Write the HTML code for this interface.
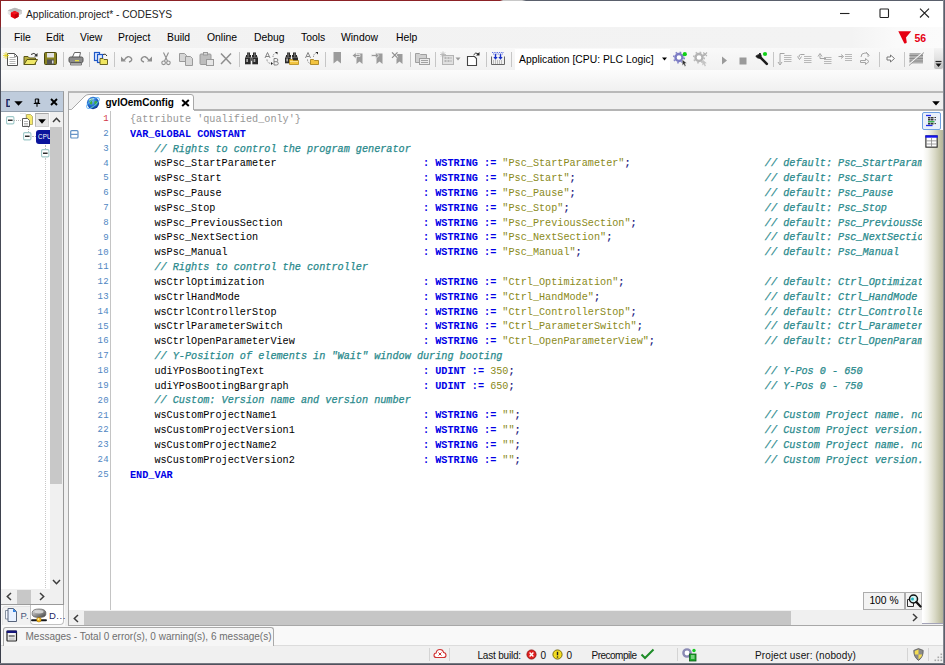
<!DOCTYPE html>
<html lang="en">
<head>
<meta charset="utf-8">
<title>Application.project* - CODESYS</title>
<style>
*{box-sizing:border-box;margin:0;padding:0}
html,body{width:945px;height:665px;overflow:hidden;background:#f0f0f0}
body{position:relative;font-family:"Liberation Sans",sans-serif;font-size:12px;color:#000}
.abs{position:absolute}
#win{position:absolute;left:0;top:0;width:945px;height:665px;overflow:hidden;background:#f0f0f0}
#titlebar{position:absolute;left:1px;top:1px;width:943px;height:26px;background:#fff}
#title{position:absolute;left:26px;top:7.6px;font-size:10.2px;line-height:14px;white-space:nowrap;color:#1c1c1c}
#menubar{position:absolute;left:1px;top:27px;width:943px;height:21px;background:linear-gradient(90deg,#f2f2f2 0,#f3f3f3 850px,#fafafa 895px,#fbfbfb 100%)}
.mi{position:absolute;top:31px;font-size:10.4px;line-height:14px;white-space:nowrap}
#toolbar{position:absolute;left:1px;top:48px;width:943px;height:22px;background:linear-gradient(#f9f9f9,#f1f1f1)}
#subbar{position:absolute;left:1px;top:70px;width:943px;height:21px;background:linear-gradient(#fcfcfc,#f0f0f0)}
.sep{position:absolute;top:52px;width:1px;height:15px;background:#c8c8c8}
.ico{position:absolute;top:51px;width:16px;height:16px}
/* borders */
#bt{position:absolute;left:0;top:0;width:945px;height:1px;background:linear-gradient(90deg,#8c2226 0,#8c2226 500px,#c8c8c8 503px,#c8c8c8 522px,#5a606c 526px,#5a606c 100%)}
#bl{position:absolute;left:0;top:0;width:1px;height:665px;background:linear-gradient(#8c2226 0,#8c2226 26px,#4c505c 29px,#3a3e4a 100%)}
#br{position:absolute;right:0;top:0;width:2px;height:665px;background:linear-gradient(90deg,#9a9ca4,#474c5a)}
#bb{position:absolute;left:0;bottom:0;width:945px;height:2px;background:linear-gradient(#8a8c94,#3c404c)}

#edframe{position:absolute;left:68px;top:91px;width:876px;height:535px;background:#f0f0f0;border:1px solid #a8a8a8;border-top:2px solid #b9b9b9}
#tabstrip{position:absolute;left:69px;top:109px;width:875px;height:2px;background:#b4b4b4}
#tabtxt{position:absolute;left:105.500px;top:95.800px;font-size:10px;line-height:14px;font-weight:bold;white-space:nowrap}
#edbody{position:absolute;left:69px;top:111px;width:874px;height:499px;background:#fff}
#gutline{position:absolute;left:110px;top:111px;width:1px;height:499px;background:#c4c4c4}
#code{z-index:2;position:absolute;left:130px;top:112.9px;width:792.2px;height:499px;overflow:hidden;font-family:"Liberation Mono",monospace;font-size:10.18px;color:#000}
.ln{position:absolute;left:0;height:14.82px;line-height:14.82px;white-space:pre}
.k{color:#0000e6;font-weight:bold}
.a{color:#979797}
.c{color:#2a8a8c;font-style:italic;-webkit-text-stroke:0.25px #2a8a8c}
.d{color:#2a8a8c;font-style:italic;-webkit-text-stroke:0.25px #2a8a8c}
.s{color:#8a8a20}
.p{color:#1a1a80;font-weight:bold}
#nums{position:absolute;left:69px;top:112.2px;width:39.7px;height:499px;font-family:"Liberation Mono",monospace;font-size:9px;color:#4f86c2}
.no{font-size:9px;letter-spacing:0.4px;margin-right:-0.4px;position:absolute;right:0;height:14.82px;line-height:14.82px;text-align:right}
.no.cur{color:#d23a4a}

#lp{position:absolute;left:1px;top:91px;width:63px;height:514px;background:#f0f0f0;border:1px solid #9a9a9a;border-left:0;border-top-color:#a9b3bf}
#lphead{position:absolute;left:1px;top:92px;width:62px;height:20px;background:#bfccdc;border-bottom:1px solid #93a0ae}
#lptree{position:absolute;left:1px;top:112px;width:49px;height:477px;background:#fff}
#lpvs{position:absolute;left:50px;top:112px;width:13px;height:477px;background:#f0f0f0}
#lpvt{position:absolute;left:50px;top:127px;width:12.3px;height:357px;background:#c8c8c8}
#lphs{position:absolute;left:1px;top:589px;width:49px;height:15px;background:#f0f0f0}
#lpht{position:absolute;left:17px;top:590px;width:14px;height:14px;background:#c8c8c8}
#lptabs{position:absolute;left:1px;top:605px;width:64px;height:21px;background:#f9f9f9}
#lptab1{position:absolute;left:2px;top:606px;width:29px;height:19px;background:#f1f1f1;border-radius:4px 0 0 0;border-top:1px solid #e4e4e4;border-left:1px solid #e4e4e4}
#lptab2{position:absolute;left:30px;top:605px;width:34px;height:20px;background:#fff;border:1px solid #c2c2c2;border-top:0;border-radius:0 0 4px 4px}

#combo{position:absolute;left:515px;top:49px;width:155px;height:21px;background:#fff}
#combotxt{position:absolute;left:519px;top:53px;font-size:10.35px;line-height:14px;white-space:nowrap}
#ovf{position:absolute;left:934px;top:48px;width:9px;height:21px;background:linear-gradient(#f4f4f4,#e0e0e0 55%,#bcbcbc);border-radius:0 0 2px 2px}

#rstrip{position:absolute;left:922px;top:130px;width:21px;height:494px;background:linear-gradient(90deg,#fff 0,#fff 5%,#f4f4ee 28%,#d9d9c6 62%,#c2c2a6 86%,#b4b49c 100%);border-bottom:1px solid #a4a4b8}
#hs{position:absolute;left:69px;top:610px;width:852px;height:15px;background:#f0f0f0}
#hst{position:absolute;left:84px;top:611px;width:707px;height:14px;background:#c6c6c6}
#msgbar{position:absolute;left:1px;top:626px;width:943px;height:20px;background:#f9f9f9;border-bottom:1px solid #dcdcdc}
#msgtab{position:absolute;left:3px;top:627px;width:271px;height:19px;border:1px solid #a9a9a9;border-bottom:0;border-radius:3px 3px 0 0;background:#f6f6f6}
#msgtxt{position:absolute;left:25.500px;top:629.700px;font-size:10px;line-height:14px;color:#6e6e6e;white-space:nowrap}
#status{position:absolute;left:1px;top:646px;width:943px;height:17px;background:#f0f0f0}
.ssep{position:absolute;top:648px;width:1px;height:13px;background:#d4d4d4}
.st{position:absolute;top:648.500px;font-size:10px;line-height:14px;white-space:nowrap;color:#111}
</style>
</head>
<body>
<div id="win">
<div id="titlebar"></div>
<div id="title">Application.project* - CODESYS</div>
<div id="menubar"></div>
<div class="mi" style="left:14px">File</div>
<div class="mi" style="left:46px">Edit</div>
<div class="mi" style="left:80px">View</div>
<div class="mi" style="left:118px">Project</div>
<div class="mi" style="left:167px">Build</div>
<div class="mi" style="left:207px">Online</div>
<div class="mi" style="left:254px">Debug</div>
<div class="mi" style="left:301px">Tools</div>
<div class="mi" style="left:341px">Window</div>
<div class="mi" style="left:396px">Help</div>
<div id="toolbar"></div>
<div id="subbar"></div>
<!--TOOLBAR-->
<div id="combo"></div>
<div id="combotxt">Application [CPU: PLC Logic]</div>
<div id="ovf"></div>
<svg class="abs" style="left:0;top:48px" width="945" height="22" viewBox="0 48 945 22">
<g fill="none" stroke-linecap="butt">
<!-- separators -->
<g stroke="#c6c6c6" stroke-width="1">
<path d="M63.5 52V67M89.5 52V67M114.500 52V67M239.500 52V67M325.500 52V67M410.500 52V67M435.500 52V67M486.500 52V67M511.500 52V67M773.500 52V67M879.500 52V67M904.500 52V67"/>
</g>
<!-- new -->
<path d="M7.500 53.500H14.500L17.500 56.500V65.500H7.500Z" fill="#fff" stroke="#505050" stroke-width="1"/>
<path d="M14.500 53.500V56.500H17.500" fill="none" stroke="#707070" stroke-width="0.800"/>
<path d="M9.500 57.500H15.500M9.500 59.500H15.500M9.500 61.500H15.500M9.500 63.500H15.500" stroke="#b4b4b4" stroke-width="1"/>
<path d="M3 55.500H9M6 52V59M3.800 53.200L8.200 57.800M8.200 53.200L3.800 57.800" stroke="#e4d418" stroke-width="0.800"/>
<!-- open -->
<path d="M24 64.500V56.500H28L29.500 58H35.500V64.500Z" fill="#b8b040" stroke="#5a5618" stroke-width="1"/>
<path d="M24 64.500L27 59.500H37.500L34.500 64.500Z" fill="#f0e868" stroke="#5a5618" stroke-width="1"/>
<path d="M31 54.500Q34 52 36.500 55" stroke="#333" stroke-width="1"/><path d="M37.500 53V56.500H34Z" fill="#333"/>
<!-- save -->
<rect x="44.500" y="52.500" width="12" height="12" rx="1" fill="#8a8420" stroke="#4a4810" stroke-width="1"/>
<rect x="47" y="53" width="7" height="4.500" fill="#e4e4e4"/>
<rect x="47" y="59.500" width="7" height="5" fill="#555"/><rect x="52" y="60.500" width="1.500" height="3" fill="#ddd"/>
<!-- print -->
<path d="M72.500 57L74.500 52.500H80.500L79.500 57" fill="#fff" stroke="#666" stroke-width="1"/>
<rect x="69" y="57" width="14" height="5.500" rx="1.500" fill="#8c8c8c" stroke="#555" stroke-width="1"/>
<path d="M70.500 63H81.500V65H70.500Z" fill="#d0d0d0" stroke="#666" stroke-width="0.800"/>
<rect x="75" y="60" width="4" height="1.300" fill="#e8e040"/>
<!-- archive -->
<rect x="94.500" y="52.500" width="5" height="8" fill="#dfeaff" stroke="#1e58c8" stroke-width="1.200"/>
<rect x="97.500" y="54.500" width="5" height="8" fill="#dfeaff" stroke="#1e58c8" stroke-width="1.200"/>
<path d="M100 64.500V58.500H103L104 59.500H107.500V64.500Z" fill="#f0e660" stroke="#6a6420" stroke-width="1"/>
<path d="M103 54.500Q105.500 53 107 56" stroke="#333" stroke-width="1"/>
<!-- undo / redo (disabled) -->
<g stroke="#8e8e8e" stroke-width="1.400">
<path d="M124 60.500Q128 54 131.500 58.500Q132.500 61 129 62"/><path d="M121 56.500V61.500H126Z" fill="#8e8e8e" stroke="none"/>
<path d="M149 60.500Q145 54 141.500 58.500Q140.500 61 144 62"/><path d="M152 56.500V61.500H147Z" fill="#8e8e8e" stroke="none"/>
</g>
<!-- cut -->
<g stroke="#8e8e8e" stroke-width="1.100">
<path d="M163.500 52.500L167.500 61M168.500 52.500L164.500 61"/><circle cx="163.600" cy="62.800" r="1.800"/><circle cx="168.400" cy="62.800" r="1.800"/>
</g>
<!-- copy -->
<g stroke="#9a9a9a" stroke-width="1" fill="#d6d6d6">
<path d="M179.500 53.500H184.500L186.500 55.500V61.500H179.500Z"/><path d="M185.500 56.500H190.500L192.500 58.500V65.500H185.500Z"/>
</g>
<!-- paste -->
<g stroke="#9a9a9a" stroke-width="1" fill="#bdbdbd">
<rect x="200" y="54" width="11" height="10.500" rx="1"/><rect x="203.500" y="52.500" width="4" height="2.500" fill="#d8d8d8"/><rect x="206.500" y="59.500" width="7" height="6" fill="#e6e6e6"/>
</g>
<!-- delete -->
<path d="M221 53.500L231 64M231 53.500L221 64" stroke="#8e8e8e" stroke-width="1.500"/>
<!-- find -->
<g stroke="none">
<path d="M247 52.500H250V55H251V57.500H245.500V56.500H246V55H247Z" fill="#2a2a2a"/>
<path d="M253 52.500H256V55H257V56.500H257.500V57.500H252V55H253Z" fill="#2a2a2a"/>
<path d="M245 57.500H250.700V64.300H245Z" fill="#2a2a2a"/><path d="M252.300 57.500H258V64.300H252.300Z" fill="#2a2a2a"/>
<rect x="250.700" y="57.500" width="1.600" height="3.300" fill="#555"/>
<rect x="246.300" y="59" width="1.700" height="3" fill="#a8a8a8"/><rect x="253.600" y="59" width="1.700" height="3" fill="#a8a8a8"/>
<rect x="247.600" y="53.300" width="1" height="3.500" fill="#8a8a8a"/><rect x="254.300" y="53.300" width="1" height="3.500" fill="#8a8a8a"/>
</g>
<!-- replace A->B -->
<g stroke="#777" stroke-width="0.900">
<path d="M265 58L267.500 52.500L270 58M266 56.500H269"/><path d="M274 58.500V65H276.500Q278.300 65 278.300 63.400Q278.300 61.800 276.500 61.700H274M276.500 61.700Q277.800 61.600 277.800 60.100Q277.800 58.500 276.300 58.500H274"/>
<path d="M267 59.500Q267 63.500 272 63.500" stroke-dasharray="1.200 1"/><path d="M271 62V65L273 63.500Z" fill="#222" stroke="none"/>
<path d="M273 57Q273 54 275.500 53" stroke-dasharray="1.200 1"/><path d="M275 52H277.500V54.500Z" fill="#222" stroke="none"/>
</g>
<!-- find in files -->
<g stroke="none">
<path d="M287 52.500H290V55H291V57.500H285.500V56.500H286V55H287Z" fill="#2a2a2a"/>
<path d="M293 52.500H296V55H297V56.500H297.500V57.500H292V55H293Z" fill="#2a2a2a"/>
<path d="M285 57.500H290.700V63.300H285Z" fill="#2a2a2a"/><path d="M292.300 57.500H298V61H292.300Z" fill="#2a2a2a"/>
<rect x="286.300" y="58.500" width="1.700" height="3" fill="#a8a8a8"/>
<rect x="287.600" y="53.300" width="1" height="3.500" fill="#8a8a8a"/><rect x="294.300" y="53.300" width="1" height="3.500" fill="#8a8a8a"/>
</g>
<path d="M289.500 64.500V59.500H292.500L293.500 60.500H298.500V64.500Z" fill="#f2c440" stroke="#b08818" stroke-width="0.800"/>
<path d="M290 61.500H298" stroke="#fbe08a" stroke-width="1"/>
<!-- replace in files -->
<g stroke="#777" stroke-width="0.900">
<path d="M305.500 58L308 52.500L310.500 58M306.500 56.500H309.500"/><path d="M307.500 59.500Q307.500 63 310.500 63.500" stroke-dasharray="1.200 1"/>
<path d="M313.500 57Q313.500 54 316 53" stroke-dasharray="1.200 1"/><path d="M315.500 52H318V54.500Z" fill="#222" stroke="none"/>
</g>
<path d="M310.500 64.500V59.500H313.500L314.500 60.500H318.500V64.500Z" fill="#f2c440" stroke="#a07810" stroke-width="0.800"/>
<!-- bookmarks (disabled) -->
<g fill="#9c9c9c" stroke="none">
<path d="M333.500 52H341V63.500L337.250 60.500L333.500 63.500Z"/>
<path d="M356.500 53.500H362.500V64L359.500 61.500L356.500 64Z"/>
<path d="M376.500 53.500H382.500V64L379.500 61.500L376.500 64Z"/>
<path d="M396.500 54H402.500V64L399.500 61.500L396.500 64Z"/>
</g>
<path d="M352.300 55.500L356 52.300V54.500H360V56.500H356V58.700Z" fill="#9a9a9a" stroke="#f6f6f6" stroke-width="0.700"/>
<path d="M379.200 55.500L375.500 52.300V54.500H371.300V56.500H375.500V58.700Z" fill="#9a9a9a" stroke="#f6f6f6" stroke-width="0.700"/>
<path d="M392 52.300L397.500 57.800M397.500 52.300L392 57.800" stroke="#f6f6f6" stroke-width="2.400"/>
<path d="M392 52.300L397.500 57.800M397.500 52.300L392 57.800" stroke="#8e8e8e" stroke-width="1.200"/>
<!-- folder list -->
<g stroke="#a0a0a0" stroke-width="1" fill="#d0d0d0">
<path d="M415.500 62.500V53.500H419.500L420.500 54.500H426.500V62.500Z"/><rect x="419.500" y="58.500" width="10" height="6" fill="#ececec"/>
</g>
<path d="M421 60.500H428M421 62.500H428" stroke="#9a9a9a" stroke-width="0.900"/>
<!-- grid star -->
<g stroke="#b4b4b4" stroke-width="1" fill="#e0e0e0">
<rect x="442.500" y="55.500" width="11" height="9"/>
</g>
<path d="M444.500 58H451.500M444.500 61H451.500" stroke="#a8a8a8" stroke-width="1.600" stroke-dasharray="2 1"/>
<path d="M440 54.500H446M443 51.500V57.500M441 52.500L445 56.500M445 52.500L441 56.500" stroke="#b8b8b8" stroke-width="0.900"/>
<path d="M455.500 57.500H460.500L458 60.500Z" fill="#9a9a9a"/>
<!-- doc arrow -->
<path d="M467.500 56.500H474.500L476.500 58.500V65.500H467.500Z" fill="#fff" stroke="#444" stroke-width="1.100"/>
<path d="M473.500 55Q475.500 51.500 478.500 54" stroke="#333" stroke-width="1"/><path d="M479.500 52V55.500H476Z" fill="#222"/>
<!-- blue arrows grid -->
<path d="M491.500 56.500V64.500H504.500V56.500" fill="#f0f0f0" stroke="#666" stroke-width="1"/>
<path d="M493 61H503M493 63H503" stroke="#888" stroke-width="1" stroke-dasharray="1 1"/>
<path d="M495.500 54V58M500.500 54V58" stroke="#1830c8" stroke-width="1.400"/><path d="M493.300 57H497.700L495.500 59.800ZM498.300 57H502.700L500.500 59.800Z" fill="#1830c8"/>
<path d="M492 52.500H504M493 54H503" stroke="#4a60e0" stroke-width="0.900" stroke-dasharray="1.300 1"/>
<!-- combo arrow -->
<path d="M662 57.500H667L664.500 60.500Z" fill="#000"/>
<!-- gear green -->
<circle cx="679" cy="57.500" r="5.300" stroke="#8686c8" stroke-width="1.600" stroke-dasharray="1.700 2.460"/>
<circle cx="679" cy="57.500" r="3.500" stroke="#7c7cc4" stroke-width="2.400" fill="#fff"/>
<circle cx="684.800" cy="54.200" r="2.100" fill="#10d018"/>
<path d="M682.300 59.500L686.800 63.300L684.800 63.600L686 65.800L684.800 66.400L683.700 64.200L682.300 65.500Z" fill="#333" stroke="#fff" stroke-width="0.400"/>
<!-- gear gray -->
<circle cx="699" cy="57.500" r="5.300" stroke="#bcbcbc" stroke-width="1.600" stroke-dasharray="1.700 2.460"/>
<circle cx="699" cy="57.500" r="3.500" stroke="#b4b4b4" stroke-width="2.400" fill="#fff"/>
<path d="M703.300 52.500L707 56.200M707 52.500L703.300 56.200" stroke="#b0b0b0" stroke-width="1.100"/>
<path d="M702.500 59.500L706.800 63.300L704.800 63.600L706 65.800L704.800 66.400L703.700 64.200L702.300 65.500Z" fill="#c4c4c4"/>
<!-- play stop -->
<path d="M722 56.500L727 60.500L722 64.500Z" fill="#9a9a9a"/>
<rect x="739.500" y="57.500" width="7" height="7" fill="#9a9a9a"/>
<!-- wrench -->
<path d="M760 57L766.800 63.800" stroke="#1c1c1c" stroke-width="2.600" stroke-linecap="round"/>
<path d="M755.800 56.300Q757.500 58.800 760.500 58.200Q762 55.500 760 53Q758.800 55.500 757.300 55.200Q756.500 55.500 755.800 56.300Z" fill="#1c1c1c" stroke="#1c1c1c" stroke-width="1"/>
<circle cx="765" cy="54" r="2.100" fill="#10d018"/>
<!-- step icons (disabled) -->
<g stroke="#a4a4a4" stroke-width="1">
<path d="M784.500 53.500H780V63.500M778 62L780 65L782 62" /><path d="M784 55.500H791.500M784 57.500H791.500M784 59.500H791.500M784 61.500H791.500" stroke="#b8b8b8"/>
<path d="M804.500 54.500H800.500Q799 54.500 799 57M797.500 56.500L799.500 59.500L801.500 56.500"/><path d="M804 56.500H811.500M804 58.500H811.500M804 60.500H811.500M804 62.500H811.500" stroke="#b8b8b8"/>
<path d="M820 58.500H826M820 58.500V55.500M818 56.500L820 53.500L822 56.500"/><path d="M824 59.500H831.500M824 61.500H831.500M824 63.500H831.500M824 57.500H831.500" stroke="#b8b8b8"/>
<path d="M838.500 56.500H842.500M841 54.500L843.500 56.500L841 58.500"/><path d="M845 54.500H852M845 56.500H852M845 58.500H852M845 60.500H852" stroke="#b8b8b8"/>
<path d="M861 57Q861 53 865 53Q869 53 868 57M866 52L869.500 55.500"/><path d="M860.500 60.500H865.500V58.500L869 61.500L865.500 64.500V62.500H860.500Z" fill="#f4f4f4"/>
</g>
<!-- arrow outline -->
<path d="M887 57H890.500V55L894.500 58.500L890.500 62V60H887Z" fill="#fff" stroke="#777" stroke-width="1"/>
<!-- striped -->
<rect x="909.500" y="53" width="13.500" height="10.500" fill="#b0b0b0"/>
<path d="M909.500 55.500H923M909.500 58.500H923M909.500 61H923" stroke="#8c8c8c" stroke-width="1"/>
<path d="M908.500 65L923.500 52" stroke="#f4f4f4" stroke-width="1.600"/><path d="M909 65.500L924 52.500" stroke="#8c8c8c" stroke-width="0.800"/>
<!-- overflow -->
<path d="M935.500 61.500H941.500" stroke="#222" stroke-width="1.200"/><path d="M935.500 63.500H941.500L938.500 67Z" fill="#111"/>
</g>
</svg>
<!--/TOOLBAR-->
<!--LEFT-->
<div id="lp"></div>
<div id="lphead"></div>
<div class="abs" style="left:5.500px;top:95.500px;width:4.500px;height:14px;overflow:hidden;font-size:10.500px;line-height:14px;color:#1c2a63;font-weight:bold;white-space:nowrap"><span style="position:absolute;left:0;top:0">D</span></div>
<svg class="abs" style="left:14px;top:100.700px" width="9" height="5" viewBox="0 0 9 5"><path d="M0.3 0.3 H8.7 L4.5 4.8 Z" fill="#000"/></svg>
<svg class="abs" style="left:32.5px;top:97.5px" width="8" height="9" viewBox="0 0 8 9"><path d="M2.3 1H5.7V5H2.3Z" fill="#bfccdc" stroke="#000" stroke-width="1"/><path d="M5.2 1V5M0.8 5.500H7.2M4 5.500V8.700" stroke="#000" stroke-width="1.100" fill="none"/></svg>
<svg class="abs" style="left:50px;top:98px" width="8" height="8" viewBox="0 0 8 8"><path d="M1 1L7 7M7 1L1 7" stroke="#000" stroke-width="1.9" fill="none"/></svg>
<div id="lptree"></div>
<!-- tree row 1 -->
<svg class="abs" style="left:6px;top:115.700px" width="9" height="9" viewBox="0 0 9 9"><rect x="0.6" y="0.6" width="7.3" height="7.3" rx="1.2" fill="#fff" stroke="#9fc9c9" stroke-width="1.1"/><path d="M2 4.25 H6.6" stroke="#222" stroke-width="1.4"/></svg>
<div class="abs" style="left:14px;top:119.500px;width:7px;height:0;border-top:1px dotted #b8b8b8"></div>
<svg class="abs" style="left:19.500px;top:112.500px" width="14" height="15" viewBox="0 0 14 15">
  <path d="M0.500 0.500H5.500V5" fill="none" stroke="#c4c4c4" stroke-width="0.800" stroke-dasharray="1 1"/>
  <path d="M6.500 1.500H10.500L12.500 3.500V11.500H6.500Z" fill="#f6ea6e" stroke="#a8a058" stroke-width="0.800"/>
  <path d="M2.500 5.500H7.500L9.500 7.500V13.500H2.500Z" fill="#fff" stroke="#4a4a4a" stroke-width="0.900"/>
  <path d="M4 8.500H8M4 10.500H8M4 12H8" stroke="#9a9a9a" stroke-width="0.700"/>
</svg>
<div class="abs" style="left:34.500px;top:113px;width:14px;height:14px;background:#e6e6e6;border:1px solid #d0d0d0;border-top-color:#a8a8a8;border-left-color:#b8b8b8"></div>
<svg class="abs" style="left:37.500px;top:118.500px" width="8" height="5" viewBox="0 0 8 5"><path d="M0.2 0.3 H7.8 L4 4.8 Z" fill="#000"/></svg>
<!-- tree row 2 -->
<div class="abs" style="left:28px;top:127px;width:0;height:5px;border-left:1px dotted #b8b8b8"></div>
<svg class="abs" style="left:23px;top:132px" width="9" height="9" viewBox="0 0 9 9"><rect x="0.6" y="0.6" width="7.3" height="7.3" rx="1.2" fill="#fff" stroke="#9fc9c9" stroke-width="1.1"/><path d="M2 4.25 H6.6" stroke="#222" stroke-width="1.4"/></svg>
<div class="abs" style="left:32px;top:136px;width:4px;height:0;border-top:1px dotted #b8b8b8"></div>
<div class="abs" style="left:36.4px;top:130px;width:13.6px;height:14px;background:#0a149c;border-radius:3px 0 0 3px;overflow:hidden"><span style="position:absolute;left:1.2px;top:1px;font-size:7.3px;line-height:12px;color:#fff;letter-spacing:0.2px;white-space:nowrap;transform:scaleX(0.85);transform-origin:0 0">CPU</span></div>
<!-- tree row 3 -->
<div class="abs" style="left:45px;top:145px;width:0;height:4px;border-left:1px dotted #b8b8b8"></div>
<svg class="abs" style="left:41px;top:148.5px" width="9" height="9" viewBox="0 0 9 9"><rect x="0.6" y="0.6" width="7.3" height="7.3" rx="1.2" fill="#fff" stroke="#9fc9c9" stroke-width="1.1"/><path d="M2 4.25 H6.6" stroke="#222" stroke-width="1.4"/></svg>
<div class="abs" style="left:45px;top:158px;width:0;height:430px;border-left:1px dotted #c8c8c8"></div>
<!-- v scrollbar -->
<div id="lpvs"></div>
<div id="lpvt"></div>
<svg class="abs" style="left:52px;top:117px" width="9" height="6" viewBox="0 0 9 6"><path d="M1 5 L4.5 1.3 L8 5" stroke="#3c3c3c" stroke-width="1.5" fill="none"/></svg>
<svg class="abs" style="left:52px;top:579px" width="9" height="6" viewBox="0 0 9 6"><path d="M1 1 L4.5 4.7 L8 1" stroke="#3c3c3c" stroke-width="1.5" fill="none"/></svg>
<!-- h scrollbar -->
<div id="lphs"></div>
<div id="lpht"></div>
<svg class="abs" style="left:6px;top:592px" width="6" height="9" viewBox="0 0 6 9"><path d="M5 1 L1.3 4.5 L5 8" stroke="#3c3c3c" stroke-width="1.5" fill="none"/></svg>
<svg class="abs" style="left:39px;top:592px" width="6" height="9" viewBox="0 0 6 9"><path d="M1 1 L4.7 4.5 L1 8" stroke="#3c3c3c" stroke-width="1.5" fill="none"/></svg>
<!-- bottom tabs -->
<div id="lptabs"></div><div id="lptab1"></div>
<div id="lptab2"></div>
<svg class="abs" style="left:4px;top:607px" width="14" height="16" viewBox="0 0 14 16">
  <path d="M1.5 3.5 H7 V12 H1.5Z" fill="#f4f8ff" stroke="#7a8796" stroke-width="0.9"/>
  <path d="M4 1.5 H9.5 L12.5 4.5 V14.5 H4Z" fill="#e8f1ff" stroke="#56637a" stroke-width="1"/>
  <path d="M9 1.5 L12.5 5 H9Z" fill="#2f7fe0"/>
</svg>
<div class="abs" style="left:20.5px;top:608.6px;font-size:9.5px;line-height:14px;color:#4a567c;white-space:nowrap;letter-spacing:0.4px">P.</div>
<svg class="abs" style="left:31px;top:608px" width="16" height="15" viewBox="0 0 16 15">
  <defs><linearGradient id="dv" x1="0" y1="0" x2="1" y2="1"><stop offset="0" stop-color="#f4f4f4"/><stop offset="0.45" stop-color="#9a9a9a"/><stop offset="1" stop-color="#3c3c3c"/></linearGradient></defs>
  <path d="M1.200 4.500Q1.500 1 8 1Q14.500 1 14.800 4.500V6.500Q14.500 9.500 8 9.500Q1.500 9.500 1.200 6.500Z" fill="url(#dv)" stroke="#5a5a5a" stroke-width="0.700"/>
  <ellipse cx="8" cy="3.800" rx="4.500" ry="1.700" fill="#dcdcdc" opacity="0.850"/>
  <path d="M8 9V11" stroke="#444" stroke-width="1.400"/>
  <path d="M1 12.300H15" stroke="#16181c" stroke-width="1.900" stroke-linecap="round"/>
  <circle cx="7.900" cy="11.700" r="2.300" fill="#f6b81c" stroke="#a87400" stroke-width="0.600"/>
  <circle cx="7.400" cy="11.100" r="0.900" fill="#fff2b0"/>
</svg>
<div class="abs" style="left:49px;top:608.6px;font-size:9.5px;line-height:14px;color:#1c2463;white-space:nowrap;letter-spacing:0.5px">D...</div>
<!--/LEFT-->
<!--EDITOR-->
<div id="edframe"></div>
<div id="tabstrip"></div>
<svg class="abs" style="left:68px;top:91px" width="130" height="20" viewBox="0 0 130 20">
  <path d="M0.5 19.5 L3.5 18.5 L17 5 Q18.5 3.5 21 3.5 L123 3.5 Q125.5 3.5 125.5 6 L125.5 19.5" fill="#fff" stroke="#a8a8a8" stroke-width="1"/>
  <rect x="1" y="19" width="125" height="2" fill="#fff"/>
</svg>
<div id="tabtxt">gvlOemConfig</div>
<svg class="abs" style="left:181px;top:99px" width="9" height="8" viewBox="0 0 9 8"><path d="M1.2 1 L7.8 7 M7.8 1 L1.2 7" stroke="#000" stroke-width="2" fill="none"/></svg>
<svg class="abs" style="left:85.5px;top:95.5px;overflow:visible" width="14" height="14" viewBox="0 0 15 15">
  <defs><radialGradient id="gl" cx="40%" cy="35%" r="70%"><stop offset="0" stop-color="#7fc3ff"/><stop offset="0.6" stop-color="#1b62c8"/><stop offset="1" stop-color="#0a2f8a"/></radialGradient></defs>
  <circle cx="7.5" cy="7.5" r="6.6" fill="url(#gl)"/>
  <path d="M3 6 Q4 3 7 2.5 Q8 4 6.5 5.5 Q7.5 7 6 9 Q4.5 9.5 3 6Z M9 6 Q11 4.5 12.5 6.5 Q12.5 9.5 10.5 11 Q8.5 9 9 6Z M5.5 11 Q7 10.5 8 12.5 Q6.5 13.5 5.5 11Z" fill="#3fae3a"/>
  <ellipse cx="7.5" cy="7.5" rx="8.2" ry="3.1" transform="rotate(-38 7.5 7.5)" stroke="#58b0f4" stroke-width="1" fill="none" opacity="0.9"/><path d="M3.5 4.500Q6 2.500 8.500 3" stroke="#e8f6ff" stroke-width="1.2" fill="none" opacity="0.8"/>
</svg>
<svg class="abs" style="left:931.5px;top:100.7px" width="8" height="5" viewBox="0 0 8 5"><path d="M0.2 0.3H7.8L4 4.6Z" fill="#000"/></svg>
<div id="edbody"></div>
<div id="gutline"></div>
<svg class="abs" style="left:70.3px;top:129.6px" width="9" height="9" viewBox="0 0 9 9"><rect x="0.7" y="0.7" width="7.3" height="7.3" rx="1" fill="#fff" stroke="#5f8fc4" stroke-width="1.2"/><path d="M1 4.35H7.700" stroke="#5f8fc4" stroke-width="1.2"/></svg>
<div id="code">
<div class="ln" style="top:0.00px"><span class="a">{attribute 'qualified_only'}</span></div>
<div class="ln" style="top:14.82px"><span class="k">VAR_GLOBAL CONSTANT</span></div>
<div class="ln" style="top:29.64px"><span class="c">    // Rights to control the program generator</span></div>
<div class="ln" style="top:44.46px">    wsPsc_StartParameter                        <span class="k">: WSTRING :=</span> <span class="s">"Psc_StartParameter"</span><span class="p">;</span>                      <span class="c">//</span><span class="d"> default:</span><span class="c"> Psc_StartParameter</span></div>
<div class="ln" style="top:59.28px">    wsPsc_Start                                 <span class="k">: WSTRING :=</span> <span class="s">"Psc_Start"</span><span class="p">;</span>                               <span class="c">//</span><span class="d"> default:</span><span class="c"> Psc_Start</span></div>
<div class="ln" style="top:74.10px">    wsPsc_Pause                                 <span class="k">: WSTRING :=</span> <span class="s">"Psc_Pause"</span><span class="p">;</span>                               <span class="c">//</span><span class="d"> default:</span><span class="c"> Psc_Pause</span></div>
<div class="ln" style="top:88.92px">    wsPsc_Stop                                  <span class="k">: WSTRING :=</span> <span class="s">"Psc_Stop"</span><span class="p">;</span>                                <span class="c">//</span><span class="d"> default:</span><span class="c"> Psc_Stop</span></div>
<div class="ln" style="top:103.74px">    wsPsc_PreviousSection                       <span class="k">: WSTRING :=</span> <span class="s">"Psc_PreviousSection"</span><span class="p">;</span>                     <span class="c">//</span><span class="d"> default:</span><span class="c"> Psc_PreviousSection</span></div>
<div class="ln" style="top:118.56px">    wsPsc_NextSection                           <span class="k">: WSTRING :=</span> <span class="s">"Psc_NextSection"</span><span class="p">;</span>                         <span class="c">//</span><span class="d"> default:</span><span class="c"> Psc_NextSection</span></div>
<div class="ln" style="top:133.38px">    wsPsc_Manual                                <span class="k">: WSTRING :=</span> <span class="s">"Psc_Manual"</span><span class="p">;</span>                              <span class="c">//</span><span class="d"> default:</span><span class="c"> Psc_Manual</span></div>
<div class="ln" style="top:148.20px"><span class="c">    // Rights to control the controller</span></div>
<div class="ln" style="top:163.02px">    wsCtrlOptimization                          <span class="k">: WSTRING :=</span> <span class="s">"Ctrl_Optimization"</span><span class="p">;</span>                       <span class="c">//</span><span class="d"> default:</span><span class="c"> Ctrl_Optimization</span></div>
<div class="ln" style="top:177.84px">    wsCtrlHandMode                              <span class="k">: WSTRING :=</span> <span class="s">"Ctrl_HandMode"</span><span class="p">;</span>                           <span class="c">//</span><span class="d"> default:</span><span class="c"> Ctrl_HandMode</span></div>
<div class="ln" style="top:192.66px">    wsCtrlControllerStop                        <span class="k">: WSTRING :=</span> <span class="s">"Ctrl_ControllerStop"</span><span class="p">;</span>                     <span class="c">//</span><span class="d"> default:</span><span class="c"> Ctrl_ControllerStop</span></div>
<div class="ln" style="top:207.48px">    wsCtrlParameterSwitch                       <span class="k">: WSTRING :=</span> <span class="s">"Ctrl_ParameterSwitch"</span><span class="p">;</span>                    <span class="c">//</span><span class="d"> default:</span><span class="c"> Ctrl_ParameterSwitch</span></div>
<div class="ln" style="top:222.30px">    wsCtrlOpenParameterView                     <span class="k">: WSTRING :=</span> <span class="s">"Ctrl_OpenParameterView"</span><span class="p">;</span>                  <span class="c">//</span><span class="d"> default:</span><span class="c"> Ctrl_OpenParameterView</span></div>
<div class="ln" style="top:237.12px"><span class="c">    // Y-Position of elements in "Wait" window during booting</span></div>
<div class="ln" style="top:251.94px">    udiYPosBootingText                          <span class="k">: UDINT :=</span> <span class="s">350</span><span class="p">;</span>                                         <span class="c">//</span><span class="c"> Y-Pos 0 - 650</span></div>
<div class="ln" style="top:266.76px">    udiYPosBootingBargraph                      <span class="k">: UDINT :=</span> <span class="s">650</span><span class="p">;</span>                                         <span class="c">//</span><span class="c"> Y-Pos 0 - 750</span></div>
<div class="ln" style="top:281.58px"><span class="c">    // Custom: Version name and version number</span></div>
<div class="ln" style="top:296.40px">    wsCustomProjectName1                        <span class="k">: WSTRING :=</span> <span class="s">""</span><span class="p">;</span>                                        <span class="c">//</span><span class="c"> Custom Project name. no</span></div>
<div class="ln" style="top:311.22px">    wsCustomProjectVersion1                     <span class="k">: WSTRING :=</span> <span class="s">""</span><span class="p">;</span>                                        <span class="c">//</span><span class="c"> Custom Project version.</span></div>
<div class="ln" style="top:326.04px">    wsCustomProjectName2                        <span class="k">: WSTRING :=</span> <span class="s">""</span><span class="p">;</span>                                        <span class="c">//</span><span class="c"> Custom Project name. no</span></div>
<div class="ln" style="top:340.86px">    wsCustomProjectVersion2                     <span class="k">: WSTRING :=</span> <span class="s">""</span><span class="p">;</span>                                        <span class="c">//</span><span class="c"> Custom Project version.</span></div>
<div class="ln" style="top:355.68px"><span class="k">END_VAR</span></div>
</div>
<div id="nums"><div class="no cur" style="top:0.00px">1</div><div class="no" style="top:14.82px">2</div><div class="no" style="top:29.64px">3</div><div class="no" style="top:44.46px">4</div><div class="no" style="top:59.28px">5</div><div class="no" style="top:74.10px">6</div><div class="no" style="top:88.92px">7</div><div class="no" style="top:103.74px">8</div><div class="no" style="top:118.56px">9</div><div class="no" style="top:133.38px">10</div><div class="no" style="top:148.20px">11</div><div class="no" style="top:163.02px">12</div><div class="no" style="top:177.84px">13</div><div class="no" style="top:192.66px">14</div><div class="no" style="top:207.48px">15</div><div class="no" style="top:222.30px">16</div><div class="no" style="top:237.12px">17</div><div class="no" style="top:251.94px">18</div><div class="no" style="top:266.76px">19</div><div class="no" style="top:281.58px">20</div><div class="no" style="top:296.40px">21</div><div class="no" style="top:311.22px">22</div><div class="no" style="top:326.04px">23</div><div class="no" style="top:340.86px">24</div><div class="no" style="top:355.68px">25</div></div>
<!--/EDITOR-->
<!--BOTTOM-->
<!-- right strip + side icons -->
<div id="rstrip"></div>
<div class="abs" style="left:922px;top:112px;width:18.5px;height:17.5px;border:1px solid #6f9fe0;border-radius:2px;background:#e9effa"></div>
<svg class="abs" style="left:925px;top:114.3px" width="13" height="13" viewBox="0 0 13 13">
  <path d="M1 1.500H6" stroke="#1e28f0" stroke-width="1.300"/><path d="M1 11.500H7.500" stroke="#1e28f0" stroke-width="1.300"/>
  <path d="M3 3.800H8.500M3 5.800H8.500M3 9.600H8.500" stroke="#333" stroke-width="1.600" stroke-dasharray="2.200 0.500 3 0.500"/>
  <path d="M3 7.700H9.500" stroke="#34b04a" stroke-width="1.300"/><path d="M9.500 3.500H11M9.500 5.800H11M9.500 9.600H11" stroke="#333" stroke-width="1"/>
</svg>
<svg class="abs" style="left:924.6px;top:134.6px" width="13.5" height="13.5" viewBox="0 0 15 15">
  <rect x="1" y="1" width="12.500" height="12.500" fill="#fff" stroke="#222" stroke-width="1.200"/>
  <rect x="0.400" y="0.400" width="13.700" height="2.600" fill="#1212f0"/>
  <path d="M1 6.500H13.500M1 10H13.500M7.250 3V13.500" stroke="#8a8a8a" stroke-width="0.900"/>
</svg>
<!-- zoom box -->
<div class="abs" style="left:863px;top:592px;width:42px;height:18px;background:#f3f3f3;border:1px solid #adadad"></div>
<div class="abs" style="left:863px;top:594px;width:42px;text-align:center;font-size:10.3px;line-height:14px;white-space:nowrap">100 %</div>
<div class="abs" style="left:905px;top:592px;width:17px;height:18px;background:#f3f3f3;border:1px solid #adadad"></div>
<svg class="abs" style="left:906px;top:593px" width="16" height="16" viewBox="0 0 16 16">
  <path d="M1.500 6.500H7.500V13.500H1.500Z" fill="#f4f4f4" stroke="#333" stroke-width="1"/>
  <circle cx="7.500" cy="6" r="4" fill="#d8f4f4" stroke="#111" stroke-width="1.500"/>
  <circle cx="6.500" cy="6" r="1.500" fill="#20b4c0"/>
  <path d="M10.300 9L14.500 13.500" stroke="#111" stroke-width="2.200" stroke-linecap="round"/>
</svg>
<!-- editor h scrollbar -->
<div id="hs"></div><div id="hst"></div>
<svg class="abs" style="left:73px;top:614px" width="6" height="9" viewBox="0 0 6 9"><path d="M5 1L1.300 4.500L5 8" stroke="#3c3c3c" stroke-width="1.500" fill="none"/></svg>
<svg class="abs" style="left:912px;top:613px" width="6" height="9" viewBox="0 0 6 9"><path d="M1 1L4.700 4.500L1 8" stroke="#3c3c3c" stroke-width="1.500" fill="none"/></svg>
<!-- messages bar -->
<div id="msgbar"></div>
<div id="msgtab"></div>
<svg class="abs" style="left:6px;top:630px" width="12" height="12" viewBox="0 0 12 12">
  <rect x="1" y="1" width="9.500" height="10" rx="0.800" fill="#f4f4f4" stroke="#222" stroke-width="1.200"/>
  <rect x="0.700" y="0.600" width="10.100" height="2.400" fill="#15157a"/>
  <rect x="2.700" y="5" width="6" height="2.200" fill="#8a8a8a"/><path d="M2.700 9H8.700" stroke="#aaa" stroke-width="1"/>
</svg>
<div id="msgtxt">Messages - Total 0 error(s), 0 warning(s), 6 message(s)</div>
<!-- status bar -->
<div id="status"></div>
<div class="ssep" style="left:429px"></div><div class="ssep" style="left:449px"></div><div class="ssep" style="left:677px"></div><div class="ssep" style="left:907px"></div><div class="ssep" style="left:928px"></div>
<svg class="abs" style="left:433px;top:648px" width="14" height="11" viewBox="0 0 14 11">
  <path d="M3.500 9.500Q1 9.500 1 7.200Q1 5.200 3.200 5Q3.500 1.500 7 1.500Q10 1.500 10.600 4.500Q13 4.800 13 7.200Q13 9.500 10.500 9.500Z" fill="#fff" stroke="#d03030" stroke-width="1.100"/>
  <path d="M5.500 4.500L8.500 7.500M8.500 4.500L5.500 7.500" stroke="#d03030" stroke-width="1"/>
</svg>
<div class="st" style="left:477.500px;letter-spacing:-0.2px">Last build:</div>
<svg class="abs" style="left:526px;top:649px" width="11" height="11" viewBox="0 0 11 11"><circle cx="5.500" cy="5.500" r="4.600" fill="#e02020" stroke="#8a0c0c" stroke-width="0.800"/><path d="M3.600 3.600L7.400 7.400M7.400 3.600L3.600 7.400" stroke="#fff" stroke-width="1.400"/></svg>
<div class="st" style="left:540.500px">0</div>
<svg class="abs" style="left:551.500px;top:649px" width="11" height="11" viewBox="0 0 11 11"><circle cx="5.500" cy="5.500" r="4.600" fill="#f4dc20" stroke="#6e6200" stroke-width="0.900"/><path d="M5.500 2.800V6.300" stroke="#222" stroke-width="1.400"/><circle cx="5.500" cy="8" r="0.800" fill="#222"/></svg>
<div class="st" style="left:566.500px">0</div>
<div class="st" style="left:591.500px;letter-spacing:-0.5px">Precompile</div>
<svg class="abs" style="left:640px;top:648px" width="15" height="12" viewBox="0 0 15 12"><path d="M1.500 6.500L5 10L13.500 1.500" stroke="#1e8c28" stroke-width="2" fill="none"/></svg>
<svg class="abs" style="left:681px;top:647px" width="17" height="15" viewBox="0 0 17 15">
  <circle cx="6" cy="6" r="3.600" stroke="#8a8ab4" stroke-width="2.400" fill="#fff"/>
  <rect x="8.500" y="7" width="6.500" height="7" fill="#1ea82c" stroke="#0c5a14" stroke-width="0.800"/>
  <path d="M10 9H13.500M10 11H13.500" stroke="#e8ffe8" stroke-width="0.900"/>
  <circle cx="13" cy="3.500" r="1.700" fill="#14c820"/>
</svg>
<div class="st" style="left:755px;letter-spacing:0.12px">Project user: (nobody)</div>
<svg class="abs" style="left:913px;top:647.500px" width="11" height="13" viewBox="0 0 11 13">
  <path d="M5.500 0.600L10.200 2.400Q10.400 9 5.500 12.400Q0.600 9 0.800 2.400Z" fill="#8a8a8a" stroke="#555" stroke-width="0.800"/>
  <path d="M5.500 1.500L1.800 3V6.500H5.500Z" fill="#f4dc50"/><path d="M5.500 6.500H9.300Q8.800 9.500 5.500 11.500Z" fill="#f4dc50"/>
</svg>
<svg class="abs" style="left:934px;top:653px" width="9" height="9" viewBox="0 0 9 9"><g fill="#a8a8a8"><rect x="6.500" y="0.500" width="1.600" height="1.600"/><rect x="3.500" y="3.500" width="1.600" height="1.600"/><rect x="6.500" y="3.500" width="1.600" height="1.600"/><rect x="0.500" y="6.500" width="1.600" height="1.600"/><rect x="3.500" y="6.500" width="1.600" height="1.600"/><rect x="6.500" y="6.500" width="1.600" height="1.600"/></g></svg>
<!-- title icon + window controls -->
<svg class="abs" style="left:7px;top:7px" width="16" height="13" viewBox="7 7 16 13">
  <path d="M14.900 7.800L22 10.300V13.800L18.500 15.500H11L7.900 13.800V10.300Z" fill="#cfcfcf"/>
  <path d="M14.900 7.800L22 10.300L18.500 12H11L7.900 10.300Z" fill="#b9b9b9"/>
  <path d="M7.900 10.500V13.800L11 15.500V12Z" fill="#e6e6e6"/>
  <path d="M14.700 11L18.600 12.700V16.800L14.700 18.700L10.800 16.800V12.700Z" fill="#e8000c"/>
  <path d="M14.700 14.500L18.600 12.700V16.800L14.700 18.700Z" fill="#c00008"/>
  <path d="M14.700 11L18.600 12.700L14.700 14.500L10.800 12.700Z" fill="#f21822"/>
</svg>
<svg class="abs" style="left:830px;top:4px" width="110" height="20" viewBox="830 4 110 20">
  <path d="M840 13.500H849.500" stroke="#222" stroke-width="1.100"/>
  <rect x="880" y="9" width="8.500" height="8.500" rx="0.800" fill="none" stroke="#222" stroke-width="1.100"/>
  <path d="M920 8.700L929 17.500M929 8.700L920 17.500" stroke="#222" stroke-width="1.100"/>
</svg>
<svg class="abs" style="left:898px;top:31px" width="14" height="13" viewBox="0 0 14 13"><path d="M0.300 0.300H13.200L8 6.500L8.800 11.500Q7.500 13 6.200 12.300Z" fill="#e60012"/></svg>
<div class="abs" style="left:914.500px;top:30.500px;font-size:10.500px;line-height:14px;font-weight:bold;color:#e60012;white-space:nowrap">56</div>
<!--/BOTTOM-->
<div id="bt"></div><div id="bl"></div><div id="br"></div><div id="bb"></div>
</div>
</body>
</html>
